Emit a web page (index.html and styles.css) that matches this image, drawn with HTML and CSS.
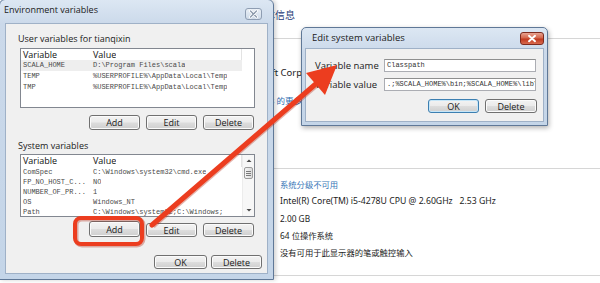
FILE: index.html
```html
<!DOCTYPE html>
<html lang="en">
<head>
<meta charset="utf-8">
<title>Environment variables</title>
<link rel="stylesheet" href="styles.css">
</head>
<body>
<div class="desk">
  <main class="sys">
    <h1 class="sys-title">查看有关计算机的基本信息</h1>
    <hr class="sys-rule rule-1">
    <p class="sys-copy">Microsoft Corporation。保留所有权利。</p>
    <p class="sys-more">Windows 的更多功能</p>
    <hr class="sys-rule rule-2">
    <ul class="sys-specs">
      <li class="link">系统分级不可用</li>
      <li class="cpu">Intel(R) Core(TM) i5-4278U CPU @ 2.60GHz&nbsp;&nbsp;&nbsp;2.53 GHz</li>
      <li>2.00 GB</li>
      <li>64 位操作系统</li>
      <li>没有可用于此显示器的笔或触控输入</li>
    </ul>
    <hr class="sys-rule rule-3">
  </main>

  <section class="win env">
    <header class="win-bar env-bar">
      <span class="win-title">Environment variables</span>
      <span class="close close-gray">
        <svg viewBox="0 0 17 12" width="17" height="12"><path d="M5.5 3 L11.5 9 M11.5 3 L5.5 9" stroke="#fff" stroke-width="3" stroke-linecap="round"/><path d="M5.5 3 L11.5 9 M11.5 3 L5.5 9" stroke="#8b99ab" stroke-width="1.3" stroke-linecap="round"/></svg>
      </span>
    </header>
    <div class="win-body env-body">
      <div class="group-label">User variables for tianqixin</div>
      <div class="list list-user">
        <div class="list-main">
          <div class="list-head"><span class="c1">Variable</span><span class="c2">Value</span></div>
          <div class="row sel"><span class="c1">SCALA_HOME</span><span class="c2">D:\Program Files\scala</span></div>
          <div class="row"><span class="c1">TEMP</span><span class="c2">%USERPROFILE%\AppData\Local\Temp</span></div>
          <div class="row"><span class="c1">TMP</span><span class="c2">%USERPROFILE%\AppData\Local\Temp</span></div>
        </div>
      </div>
      <div class="btns btns-user">
        <button class="btn">Add</button><button class="btn">Edit</button><button class="btn">Delete</button>
      </div>

      <div class="group-label label-sys">System variables</div>
      <div class="list list-sys">
        <div class="list-main">
          <div class="list-head"><span class="c1">Variable</span><span class="c2">Value</span></div>
          <div class="row"><span class="c1">ComSpec</span><span class="c2">C:\Windows\system32\cmd.exe</span></div>
          <div class="row"><span class="c1">FP_NO_HOST_C...</span><span class="c2">NO</span></div>
          <div class="row"><span class="c1">NUMBER_OF_PR...</span><span class="c2">1</span></div>
          <div class="row"><span class="c1">OS</span><span class="c2">Windows_NT</span></div>
          <div class="row"><span class="c1">Path</span><span class="c2">C:\Windows\system32;C:\Windows;</span></div>
        </div>
        <div class="scroll">
          <span class="sb-btn"><svg viewBox="0 0 12 12" width="12" height="12"><path d="M3.5 7 L6 4.5 L8.5 7 Z" fill="#4a4a4a"/></svg></span>
          <span class="sb-thumb"><i></i><i></i><i></i></span>
          <span class="sb-track"></span>
          <span class="sb-btn"><svg viewBox="0 0 12 12" width="12" height="12"><path d="M3.5 5 L6 7.5 L8.5 5 Z" fill="#4a4a4a"/></svg></span>
        </div>
      </div>
      <div class="btns btns-sys">
        <button class="btn">Add</button><button class="btn btn-low">Edit</button><button class="btn btn-low">Delete</button>
      </div>

      <div class="btns btns-main">
        <button class="btn btn-ok">OK</button><button class="btn">Delete</button>
      </div>
    </div>
  </section>

  <section class="win edit">
    <header class="win-bar edit-bar">
      <span class="win-title">Edit system variables</span>
      <span class="close close-red">
        <svg viewBox="0 0 24 13" width="24" height="13"><path d="M9 3.8 L15 9.2 M15 3.8 L9 9.2" stroke="#fff" stroke-width="2" stroke-linecap="round"/></svg>
      </span>
    </header>
    <div class="win-body edit-body">
      <div class="form">
        <label class="f-label">Variable name</label>
        <div class="f-input">Classpath</div>
        <label class="f-label">Variable value</label>
        <div class="f-input">.;%SCALA_HOME%\bin;%SCALA_HOME%\lib\</div>
      </div>
      <div class="btns btns-edit">
        <button class="btn btn-default">OK</button><button class="btn btn-wide">Delete</button>
      </div>
    </div>
  </section>

  <svg class="arrow" viewBox="0 0 600 283" width="600" height="283">
    <g fill="none" stroke="#b32412" stroke-opacity="0.35" stroke-width="5" transform="translate(1,1)">
      <rect x="75" y="218" width="67" height="26" rx="6"/>
      <line x1="152" y1="225" x2="318" y2="82"/>
    </g>
    <rect x="75" y="218" width="67" height="26" rx="6" fill="none" stroke="#ec3d1f" stroke-width="4"/>
    <line x1="152" y1="225" x2="318" y2="82" stroke="#ec3d1f" stroke-width="5" stroke-linecap="round"/>
    <polygon points="337,65 306,73 325,95" fill="#ec3d1f"/>
  </svg>
</div>
</body>
</html>
```

FILE: styles.css
```css
* { box-sizing: border-box; }
html, body { margin: 0; padding: 0; }
body {
  width: 600px;
  height: 283px;
  overflow: hidden;
  background: #ffffff;
  font-family: "Open Sans", "Noto Sans", sans-serif;
}
.desk {
  position: relative;
  width: 600px;
  height: 283px;
  overflow: hidden;
}

/* ---------- background system page ---------- */
.sys {
  font-family: "Noto Sans", "Noto Sans CJK SC", sans-serif;
  color: #1c1c1c;
  display: flex;
  flex-direction: column;
}
.sys-title {
  margin: 0;
  width: 295px;
  height: 30px;
  line-height: 30px;
  text-align: right;
  font-size: 10px;
  font-weight: normal;
  color: #1e3c78;
  font-family: "Noto Sans CJK SC", sans-serif;
}
.sys-rule {
  margin: 8px 0 0;
  border: 0;
  border-top: 1px solid #d6d6d6;
  height: 0;
  width: 100%;
}
.rule-2 { margin-top: 60px; }
.rule-3 { margin-top: 14px; }
.sys-copy {
  margin: 27px 0 0 236px;
  font-size: 9.5px;
  line-height: 14px;
  white-space: nowrap;
}
.sys-more {
  margin: 14px 0 0 238px;
  font-size: 8.5px;
  line-height: 14px;
  white-space: nowrap;
  color: #2f6db0;
}
.sys-specs {
  list-style: none;
  margin: 7px 0 0;
  padding: 0 0 0 280px;
  font-size: 8.3px;
  line-height: 17px;
  white-space: nowrap;
}
.sys-specs .link { color: #3a78b8; }
.sys-specs .cpu { font-size: 8.7px; }

/* ---------- windows ---------- */
.win {
  position: absolute;
  display: flex;
  flex-direction: column;
  border: 1px solid #5f7897;
  border-radius: 6px 6px 0 0;
  background: linear-gradient(180deg, #dce7f3 0, #cbd9ea 24px, #c4d5e8 100%);
  color: #1a1a1a;
}
.win-bar {
  display: flex;
  align-items: flex-start;
  flex: none;
}
.win-title {
  font-size: 9px;
  white-space: nowrap;
}
.close {
  margin-left: auto;
  display: block;
  border-radius: 3px;
}
.close svg { display: block; }
.win-body {
  flex: 1;
  background: #f0f0f0;
  border: 1px solid #9fb1c7;
  display: flex;
  flex-direction: column;
}

/* main dialog */
.env {
  left: -1px;
  top: -1px;
  width: 275px;
  height: 281px;
  box-shadow: 2px 0 4px rgba(0, 0, 0, 0.18);
}
.env-bar { height: 23px; }
.env-bar .win-title {
  padding: 3px 0 0 4px;
  line-height: 14px;
}
.close-gray {
  margin-top: 8px;
  margin-right: 11px;
  width: 17px;
  height: 12px;
  border: 1px solid #8e9db2;
  background: linear-gradient(180deg, #e9eff6, #cfdbe9);
}
.close-gray svg { margin: -1px 0 0 -1px; }
.env-body {
  margin: 0 5px 5px 5px;
  padding: 9px 0 0 14px;
}
.group-label {
  margin-left: -2px;
  height: 12px;
  line-height: 12px;
  font-size: 9px;
  white-space: nowrap;
}
.label-sys { margin-top: 10px; }

.list {
  display: flex;
  width: 235px;
  background: #fff;
  border: 1px solid #828790;
  overflow: hidden;
  margin-top: 3px;
}
.list-user { height: 60px; }
.list-sys { height: 63px; margin-top: 2px; }
.list-main {
  width: 221px;
  flex: none;
}
.list-head {
  display: flex;
  font-size: 9px;
  color: #111;
  border-right: 1px solid #e3e3e3;
}
.list-user .list-head { height: 11px; line-height: 11px; }
.list-sys .list-head { height: 12px; line-height: 12px; }
.c1 {
  width: 70px;
  padding-left: 2px;
  flex: none;
  white-space: nowrap;
}
.c2 {
  padding-left: 2px;
  white-space: nowrap;
  overflow: hidden;
}
.row {
  display: flex;
  font-family: "Liberation Mono", monospace;
  font-size: 7px;
  color: #4a4a4a;
}
.list-user .row { height: 11px; line-height: 11px; }
.list-sys .row { height: 10px; line-height: 10px; }
.row.sel { background: #eeeeee; }

.scroll {
  margin-left: auto;
  width: 12px;
  display: flex;
  flex-direction: column;
  background: #f7f7f7;
  border-left: 1px solid #ececec;
}
.sb-btn { height: 12px; flex: none; }
.sb-btn svg { display: block; }
.sb-thumb {
  height: 12px;
  margin: 0 1px;
  border: 1px solid #9c9c9c;
  border-radius: 2px;
  background: linear-gradient(90deg, #f4f4f4, #dcdcdc);
  display: flex;
  flex-direction: column;
  align-items: center;
  justify-content: center;
  gap: 1px;
}
.sb-thumb i {
  display: block;
  width: 5px;
  height: 1px;
  background: #7a7a7a;
}
.sb-track { flex: 1; }

.btns {
  display: flex;
  justify-content: flex-end;
  gap: 6px;
}
.btns-user {
  width: 235px;
  padding-right: 1px;
  margin-top: 7px;
  height: 15px;
}
.btns-sys {
  width: 235px;
  padding-right: 1px;
  margin-top: 4px;
  height: 16px;
  align-items: flex-start;
}
.btns-main {
  width: 242px;
  margin-top: 18px;
  gap: 4px;
  height: 14px;
}
.btn {
  width: 51px;
  height: 100%;
  padding: 0;
  margin: 0;
  font-family: "Open Sans", "Noto Sans", sans-serif;
  font-size: 9px;
  line-height: 1;
  color: #1a1a1a;
  border: 1px solid #707070;
  border-radius: 3px;
  background: linear-gradient(180deg, #f3f3f3 0%, #ebebeb 48%, #dddddd 52%, #cfcfcf 100%);
  box-shadow: inset 0 0 0 1px #fbfbfb;
}
.btns-sys .btn { height: 16px; }
.btns-sys .btn-low { height: 14px; margin-top: 2px; }
.btn-ok { width: 53px; }

/* edit dialog */
.edit {
  left: 301px;
  top: 27px;
  width: 247px;
  height: 99px;
  border-radius: 5px 5px 0 0;
  box-shadow: 1px 2px 5px rgba(0, 0, 0, 0.3);
}
.edit-bar { height: 20px; }
.edit-bar .win-title {
  padding: 3px 0 0 10px;
  line-height: 13px;
  font-size: 9.5px;
}
.close-red {
  margin-top: 4px;
  margin-right: 3px;
  width: 24px;
  height: 13px;
  border: 1px solid #7d2b1f;
  background: linear-gradient(180deg, #e8a391 0%, #d4664c 45%, #c0391f 55%, #d86a4e 100%);
}
.close-red svg { margin: -1px 0 0 -1px; }
.edit-body {
  margin: 0 3px 3px 3px;
  padding: 10px 0 0 9px;
}
.form {
  display: grid;
  grid-template-columns: 69px 152px;
  row-gap: 6px;
  align-items: center;
}
.f-label {
  font-size: 9.5px;
  line-height: 13px;
  white-space: nowrap;
}
.f-input {
  height: 13px;
  border: 1px solid #abadb3;
  border-top-color: #8e8f8f;
  background: #fff;
  font-family: "Liberation Mono", monospace;
  font-size: 7px;
  line-height: 11px;
  padding-left: 2px;
  color: #333;
  white-space: nowrap;
  overflow: hidden;
}
.btns-edit {
  width: 222px;
  margin-top: 8px;
  height: 14px;
}
.btn-wide { width: 52px; }
.btn-default {
  border-color: #3c7fb1;
  box-shadow: inset 0 0 0 1px #c6e6f8;
}

/* overlay arrow */
.arrow {
  position: absolute;
  left: 0;
  top: 0;
  pointer-events: none;
}
```
